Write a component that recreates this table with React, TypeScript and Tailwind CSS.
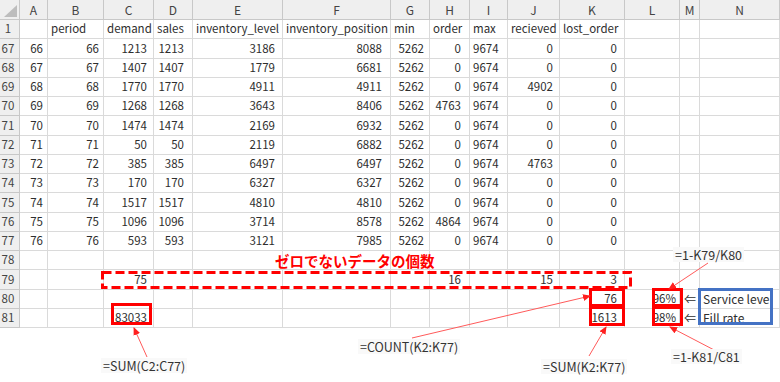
import React from "react";

const cols = ["A", "B", "C", "D", "E", "F", "G", "H", "I", "J", "K", "L", "M", "N"];

// per-column alignment/padding classes for data cells
const numCls = [
  "justify-end pr-[4px]", // A
  "justify-end pr-[4px]", // B
  "justify-end pr-[6px]", // C
  "justify-end pr-[8px]", // D
  "justify-end pr-[7px]", // E
  "justify-end pr-[8px]", // F
  "justify-end pr-[5px]", // G
  "justify-end pr-[8px]", // H
  "justify-start pl-[3px]", // I
  "justify-end pr-[6px]", // J
  "justify-end pr-[7px]", // K
  "justify-end pr-[3px]", // L
  "justify-start pl-[4px] text-[12px]", // M
  "justify-start pl-[3px] text-[12px]", // N
];

const dataRows: [string, (string | number)[]][] = [
  ["67", [66, 66, 1213, 1213, 3186, 8088, 5262, 0, 9674, 0, 0, "", "", ""]],
  ["68", [67, 67, 1407, 1407, 1779, 6681, 5262, 0, 9674, 0, 0, "", "", ""]],
  ["69", [68, 68, 1770, 1770, 4911, 4911, 5262, 0, 9674, 4902, 0, "", "", ""]],
  ["70", [69, 69, 1268, 1268, 3643, 8406, 5262, 4763, 9674, 0, 0, "", "", ""]],
  ["71", [70, 70, 1474, 1474, 2169, 6932, 5262, 0, 9674, 0, 0, "", "", ""]],
  ["72", [71, 71, 50, 50, 2119, 6882, 5262, 0, 9674, 0, 0, "", "", ""]],
  ["73", [72, 72, 385, 385, 6497, 6497, 5262, 0, 9674, 4763, 0, "", "", ""]],
  ["74", [73, 73, 170, 170, 6327, 6327, 5262, 0, 9674, 0, 0, "", "", ""]],
  ["75", [74, 74, 1517, 1517, 4810, 4810, 5262, 0, 9674, 0, 0, "", "", ""]],
  ["76", [75, 75, 1096, 1096, 3714, 8578, 5262, 4864, 9674, 0, 0, "", "", ""]],
  ["77", [76, 76, 593, 593, 3121, 7985, 5262, 0, 9674, 0, 0, "", "", ""]],
  ["78", ["", "", "", "", "", "", "", "", "", "", "", "", "", ""]],
  ["79", ["", "", 75, "", "", "", "", 16, "", 15, 3, "", "", ""]],
  ["80", ["", "", "", "", "", "", "", "", "", "", 76, "96%", "⇐", "Service leve"]],
  ["81", ["", "", 83033, "", "", "", "", "", "", "", 1613, "98%", "⇐", "Fill rate"]],
];

const headers = ["", "period", "demand", "sales", "inventory_level", "inventory_position", "min", "order", "max", "recieved", "lost_order", "", "", ""];

const cellBase = "flex items-center overflow-hidden whitespace-nowrap border-r border-b border-[#dadada]";
const rowHdr =
  "flex items-center justify-center pr-[3px] bg-[#efefef] border-r border-b border-[#c8c8c8] text-[#444] text-[11.5px]";

const callout = "absolute px-[2px] bg-[#f9f9f9] text-[12.5px] leading-[15px] text-[#333]";

export default function App() {
  return (
    <div
      className="relative w-[780px] h-[382px] overflow-hidden bg-white text-[#2e2e2e]"
      style={{ fontFamily: '"Noto Sans CJK JP", "Noto Sans", sans-serif' }}
    >
      <div className="grid grid-cols-[20px_28px_56px_50px_39px_90px_108px_39px_40px_38px_52px_65px_55px_20px_80px] grid-rows-[20px_repeat(16,19.25px)] text-[11.5px] leading-none">
        {/* corner */}
        <div className="relative bg-[#efefef] border-r border-b border-[#c8c8c8]">
          <svg className="absolute left-0 top-0" width="20" height="20" viewBox="0 0 20 20">
            <polygon points="17,5 17,17 4,17" fill="#bdbdbd" />
          </svg>
        </div>
        {cols.map((c) => (
          <div
            key={c}
            className="flex items-center justify-center bg-[#efefef] border-r border-b border-[#c8c8c8] text-[#444] text-[12px]"
          >
            {c}
          </div>
        ))}
        {/* row 1 */}
        <div className={rowHdr}>1</div>
        {headers.map((h, i) => (
          <div key={i} className={`${cellBase} justify-start pl-[3px]`}>
            {h}
          </div>
        ))}
        {dataRows.map(([r, vals]) => (
          <React.Fragment key={r}>
            <div className={rowHdr}>{r}</div>
            {vals.map((v, i) => (
              <div key={i} className={`${cellBase} ${numCls[i]}`}>
                {v}
              </div>
            ))}
          </React.Fragment>
        ))}
      </div>

      {/* annotation shapes */}
      <svg className="absolute left-0 top-0 pointer-events-none" width="780" height="382" viewBox="0 0 780 382">
        <defs>
          <marker id="ah" markerWidth="8" markerHeight="8" refX="7" refY="4" orient="auto" markerUnits="userSpaceOnUse">
            <path d="M0,0.5 L8,4 L0,7.5 z" fill="#ff2020" />
          </marker>
        </defs>
        <rect x="102.5" y="272.5" width="528" height="15" fill="none" stroke="#ff0000" strokeWidth="3" strokeDasharray="9 4" />
        <rect x="112.5" y="304.5" width="38" height="19" fill="none" stroke="#ff0000" strokeWidth="3" />
        <rect x="590.5" y="289.5" width="33" height="16" fill="none" stroke="#ff0000" strokeWidth="3" />
        <rect x="590.5" y="307.5" width="33" height="17" fill="none" stroke="#ff0000" strokeWidth="3" />
        <rect x="653.5" y="289.5" width="28" height="16" fill="none" stroke="#ff0000" strokeWidth="3" />
        <rect x="653.5" y="307.5" width="28" height="17" fill="none" stroke="#ff0000" strokeWidth="3" />
        <rect x="699.5" y="289.5" width="72" height="34" fill="none" stroke="#4472c4" strokeWidth="3" />
        <g stroke="#ff5a5a" strokeWidth="1" markerEnd="url(#ah)">
          <line x1="147" y1="357" x2="134" y2="328" />
          <line x1="412" y1="338" x2="590" y2="296" />
          <line x1="589" y1="356" x2="606" y2="327" />
          <line x1="708" y1="263" x2="669" y2="289" />
          <line x1="718" y1="352" x2="670" y2="327" />
        </g>
      </svg>

      {/* title */}
      <div className="absolute left-[275px] top-[254px] text-[14.5px] font-bold leading-none text-[#ff0000]">
        ゼロでないデータの個数
      </div>

      {/* formula callouts */}
      <div className={`${callout} left-[101px] top-[358px]`}>=SUM(C2:C77)</div>
      <div className={`${callout} left-[358px] top-[339px]`}>=COUNT(K2:K77)</div>
      <div className={`${callout} left-[541px] top-[359px]`}>=SUM(K2:K77)</div>
      <div className={`${callout} left-[673px] top-[247px]`}>=1-K79/K80</div>
      <div className={`${callout} left-[671px] top-[349px]`}>=1-K81/C81</div>
    </div>
  );
}
